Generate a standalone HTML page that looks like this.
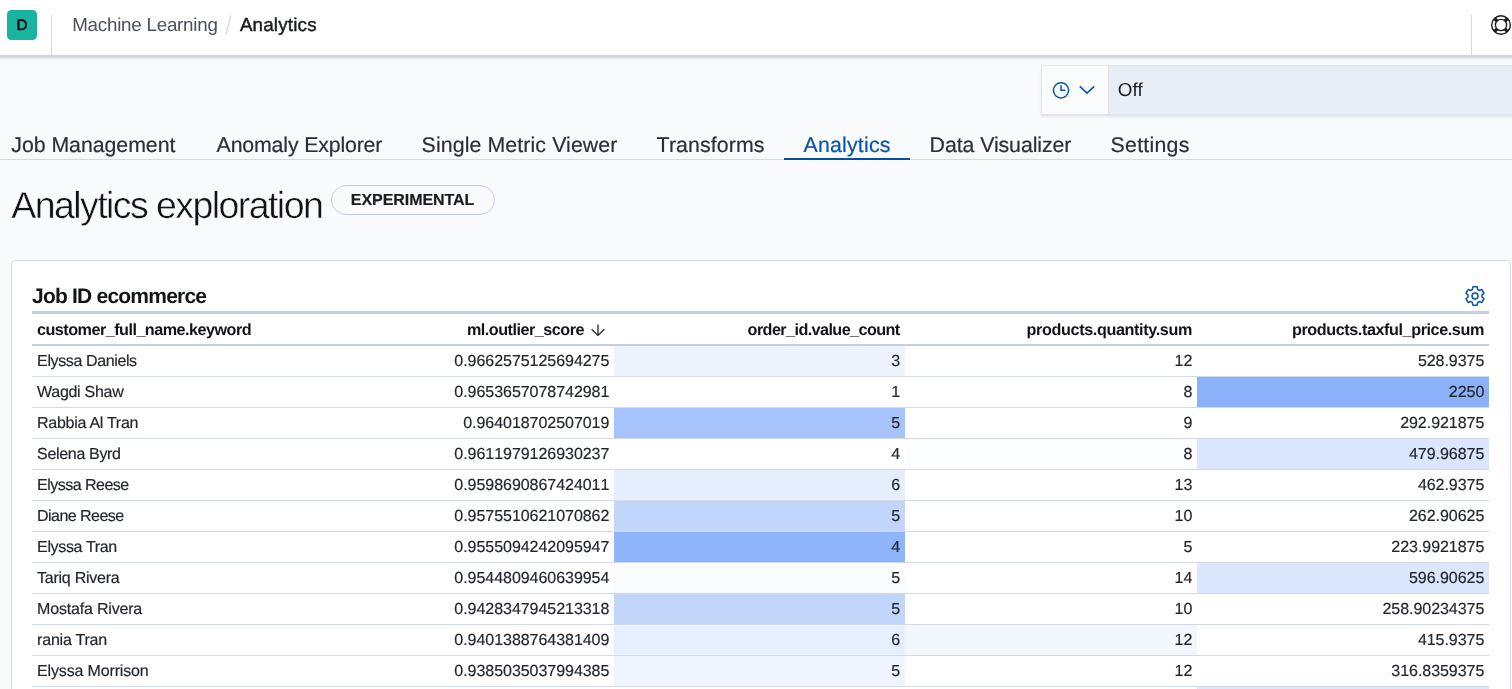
<!DOCTYPE html>
<html lang="en"><head><meta charset="utf-8"><title>Analytics - Machine Learning</title>
<style>
*{box-sizing:border-box}
html,body{margin:0;padding:0}
body{width:1512px;height:689px;overflow:hidden;will-change:transform;text-rendering:geometricPrecision;background:#F9FAFC;font-family:'Liberation Sans', sans-serif;color:#1a1c21;position:relative}
span{white-space:nowrap}
.hdr{position:absolute;left:0;top:0;width:1512px;height:55px;background:#fff;}
.hdr::after{content:'';position:absolute;left:0;top:55px;width:100%;height:6px;background:linear-gradient(#CFD4E1 0,#CFD4E1 1.5px,#DCDFE8 2.5px,#E9ECF1 3.5px,#F3F5F8 4.5px,#F9FAFC 6px)}
.avatar{position:absolute;left:7px;top:10px;width:30px;height:30px;border-radius:4.5px;background:#1AB3A0;color:#000;font-size:15.2px;font-weight:400;-webkit-text-stroke:.45px #000;text-align:center;line-height:31.5px}
.vsep{position:absolute;top:15px;width:1px;height:40px;background:#D3DAE6}
.crumbs{position:absolute;left:72.2px;top:0;height:50px;line-height:50px;font-size:18.8px;color:#4A5061}
.crumbs .cur{color:#1a1c21;-webkit-text-stroke:.45px #1a1c21}
.slash{position:absolute;left:155.6px;top:15px;width:1.3px;height:19.5px;background:#C9D0E0;transform:rotate(15deg)}
.help{position:absolute;left:1489.8px;top:14.2px}
.refresh{position:absolute;left:1041px;top:65px;width:480px;height:50px;background:#E9EDF5;border:1px solid #E0E3EA;box-shadow:0 1.5px 2px rgba(152,162,179,.22)}
.refresh .pre{position:absolute;left:0;top:0;width:67px;height:48px;background:#FBFCFD;border-right:1px solid #E0E3EA}
.refresh .off{position:absolute;left:75.7px;top:-.1px;line-height:47px;font-size:18.8px;color:#1a1c21}
.tabs{position:absolute;left:0;top:129px;width:1512px;height:31px;border-bottom:1px solid #D3DAE6}
.tab{position:absolute;top:0;height:31px;text-align:center;font-size:21.3px;line-height:31px;padding-top:.9px;color:#2B2F38;-webkit-text-stroke:.2px #2B2F38}
.tab.sel{color:#0A55A8;-webkit-text-stroke-color:#0A55A8;border-bottom:2px solid #044FA3}
h1{position:absolute;left:11.2px;top:182.6px;margin:0;font-size:37.5px;font-weight:400;line-height:44px;color:#111318;-webkit-text-stroke:.45px #F9FAFC}
.badge{position:absolute;left:330.6px;top:185px;width:164px;height:30.3px;border:1.5px solid #C4CCDF;border-radius:15px;font-size:16px;font-weight:700;-webkit-text-stroke:.2px #1a1c21;line-height:30.4px;text-align:center;color:#1a1c21;background:#F9FAFC}
.panel{position:absolute;left:11px;top:260px;width:1500px;height:460px;background:#fff;border:1px solid #D3DAE6;border-radius:5px}
h2{position:absolute;left:20px;top:23.5px;margin:0;font-size:21px;font-weight:700;line-height:24px;color:#111318}
.gear{position:absolute;left:1450.8px;top:22.9px}
table{position:absolute;left:20px;top:50px;width:1457px;border-collapse:separate;border-spacing:0;table-layout:fixed;border-top:3px solid #C6CEE0}
th,td{padding:0 5px;height:31px;overflow:hidden;white-space:nowrap}
th{font-size:16.2px;font-weight:700;height:32px;border-bottom:2px solid #C6CEE0;color:#111318;line-height:28px;padding-top:2px}
td{font-size:16px;border-bottom:1px solid #D3DAE6;line-height:28px;padding-top:1.8px;vertical-align:top;color:#23262D;-webkit-text-stroke:.18px #23262D}
td.l{padding-left:5.1px}
.l{text-align:left}
.r{text-align:right;padding-right:4.7px}
.num{font-kerning:none;letter-spacing:-0.042px;margin-right:0.042px}
.sort{vertical-align:-2.1px;margin-left:5.6px;margin-right:3.2px}
</style></head>
<body>
<header class="hdr">
  <div class="avatar">D</div>
  <div class="vsep" style="left:51px"></div>
  <nav class="crumbs"><span style="letter-spacing:-0.241px;margin-right:0.241px">Machine Learning</span><i class="slash"></i><span style="display:inline-block;width:22px"></span><span class="cur" style="letter-spacing:0.193px;margin-right:-0.193px">Analytics</span></nav>
  <div class="vsep" style="left:1471px"></div>
  <svg class="help" width="22" height="22" viewBox="0 0 22 22" fill="none" stroke="#1a1c21" stroke-width="1.4"><circle cx="11" cy="11" r="9.3"/><circle cx="11" cy="11" r="5.6"/><path d="M4.4 4.4l2.6 2.6M17.6 4.4 15 7M4.4 17.6 7 15M17.6 17.6 15 15" stroke-width="3.2"/></svg>
</header>
<div class="refresh">
  <div class="pre">
    <svg style="position:absolute;left:9.1px;top:14.2px" width="20" height="20" viewBox="0 0 20 20" fill="none" stroke="#0A55A8" stroke-width="1.5"><circle cx="10" cy="10.3" r="7.6"/><path d="M10 5.2v5.1h4.2"/></svg>
    <svg style="position:absolute;left:36px;top:17px" width="18" height="12" viewBox="0 0 18 12" fill="none" stroke="#0A55A8" stroke-width="1.6"><path d="M1.8 3.4 9 10.2l7.2-6.8"/></svg>
  </div>
  <div class="off"><span style="letter-spacing:0.141px;margin-right:-0.141px">Off</span></div>
</div>
<nav class="tabs">
<a class="tab" style="left:-8.3px;width:203.3px"><span style="letter-spacing:-0.036px;margin-right:0.036px">Job Management</span></a>
<a class="tab" style="left:197px;width:205px"><span style="letter-spacing:-0.152px;margin-right:0.152px">Anomaly Explorer</span></a>
<a class="tab" style="left:402px;width:235px"><span style="letter-spacing:0.109px;margin-right:-0.109px">Single Metric Viewer</span></a>
<a class="tab" style="left:637px;width:147px"><span style="letter-spacing:0.101px;margin-right:-0.101px">Transforms</span></a>
<a class="tab sel" style="left:784px;width:126px"><span style="letter-spacing:0.198px;margin-right:-0.198px">Analytics</span></a>
<a class="tab" style="left:910px;width:181px"><span style="letter-spacing:-0.075px;margin-right:0.075px">Data Visualizer</span></a>
<a class="tab" style="left:1091px;width:118px"><span style="letter-spacing:0.264px;margin-right:-0.264px">Settings</span></a>
</nav>
<h1><span style="letter-spacing:-1.567px;margin-right:1.567px">Analytics exploration</span></h1>
<div class="badge"><span style="letter-spacing:-0.051px;margin-right:0.051px">EXPERIMENTAL</span></div>
<section class="panel">
  <h2><span style="letter-spacing:-0.783px;margin-right:0.783px">Job ID ecommerce</span></h2>
  <svg class="gear" width="24" height="24" viewBox="0 0 24 24" fill="none" stroke="#0A55A8" stroke-width="1.5" stroke-linejoin="round"><circle cx="12" cy="12" r="3"/><path d="M14.74 5.56 L14.11 2.84 L9.89 2.84 L9.26 5.56 L7.79 6.41 L5.13 5.59 L3.01 9.25 L5.05 11.15 L5.05 12.85 L3.01 14.75 L5.13 18.41 L7.79 17.59 L9.26 18.44 L9.89 21.16 L14.11 21.16 L14.74 18.44 L16.21 17.59 L18.87 18.41 L20.99 14.75 L18.95 12.85 L18.95 11.15 L20.99 9.25 L18.87 5.59 L16.21 6.41Z"/></svg>
  <table>
  <colgroup><col style="width:291px"><col style="width:291.05px"><col style="width:290.85px"><col style="width:292.1px"><col style="width:292px"></colgroup>
  <thead><tr><th class="l"><span style="letter-spacing:-0.52px;margin-right:0.52px">customer_full_name.keyword</span></th><th class="r"><span style="letter-spacing:-0.491px;margin-right:0.491px">ml.outlier_score</span><svg class="sort" width="16" height="14" viewBox="0 0 16 14"><path d="M8 1.5v11M1.6 6.2 8 12.4l6.4-6.2" fill="none" stroke="#23262D" stroke-width="1.3"/></svg></th><th class="r"><span style="letter-spacing:-0.585px;margin-right:0.585px">order_id.value_count</span></th><th class="r"><span style="letter-spacing:-0.379px;margin-right:0.379px">products.quantity.sum</span></th><th class="r"><span style="letter-spacing:-0.417px;margin-right:0.417px">products.taxful_price.sum</span></th></tr></thead>
  <tbody>
<tr><td class="l"><span style="letter-spacing:-0.38px;margin-right:0.38px">Elyssa Daniels</span></td><td class="r"><span class="num">0.9662575125694275</span></td><td class="r" style="background:#EEF4FE"><span class="num">3</span></td><td class="r"><span class="num">12</span></td><td class="r"><span class="num">528.9375</span></td></tr>
<tr><td class="l"><span style="letter-spacing:-0.293px;margin-right:0.293px">Wagdi Shaw</span></td><td class="r"><span class="num">0.9653657078742981</span></td><td class="r"><span class="num">1</span></td><td class="r"><span class="num">8</span></td><td class="r" style="background:#8AB1FA"><span class="num">2250</span></td></tr>
<tr><td class="l"><span style="letter-spacing:-0.281px;margin-right:0.281px">Rabbia Al Tran</span></td><td class="r"><span class="num">0.964018702507019</span></td><td class="r" style="background:#A6C4FB"><span class="num">5</span></td><td class="r"><span class="num">9</span></td><td class="r"><span class="num">292.921875</span></td></tr>
<tr><td class="l"><span style="letter-spacing:-0.327px;margin-right:0.327px">Selena Byrd</span></td><td class="r"><span class="num">0.9611979126930237</span></td><td class="r"><span class="num">4</span></td><td class="r" style="background:#FCFDFF"><span class="num">8</span></td><td class="r" style="background:#D9E6FD"><span class="num">479.96875</span></td></tr>
<tr><td class="l"><span style="letter-spacing:-0.521px;margin-right:0.521px">Elyssa Reese</span></td><td class="r"><span class="num">0.9598690867424011</span></td><td class="r" style="background:#E4EEFD"><span class="num">6</span></td><td class="r"><span class="num">13</span></td><td class="r"><span class="num">462.9375</span></td></tr>
<tr><td class="l"><span style="letter-spacing:-0.54px;margin-right:0.54px">Diane Reese</span></td><td class="r"><span class="num">0.9575510621070862</span></td><td class="r" style="background:#C2D6FB"><span class="num">5</span></td><td class="r"><span class="num">10</span></td><td class="r"><span class="num">262.90625</span></td></tr>
<tr><td class="l"><span style="letter-spacing:-0.349px;margin-right:0.349px">Elyssa Tran</span></td><td class="r"><span class="num">0.9555094242095947</span></td><td class="r" style="background:#8FB4FA"><span class="num">4</span></td><td class="r"><span class="num">5</span></td><td class="r"><span class="num">223.9921875</span></td></tr>
<tr><td class="l"><span style="letter-spacing:-0.251px;margin-right:0.251px">Tariq Rivera</span></td><td class="r"><span class="num">0.9544809460639954</span></td><td class="r" style="background:#FBFCFF"><span class="num">5</span></td><td class="r"><span class="num">14</span></td><td class="r" style="background:#DAE7FD"><span class="num">596.90625</span></td></tr>
<tr><td class="l"><span style="letter-spacing:-0.192px;margin-right:0.192px">Mostafa Rivera</span></td><td class="r"><span class="num">0.9428347945213318</span></td><td class="r" style="background:#C2D6FB"><span class="num">5</span></td><td class="r"><span class="num">10</span></td><td class="r"><span class="num">258.90234375</span></td></tr>
<tr><td class="l"><span style="letter-spacing:-0.216px;margin-right:0.216px">rania Tran</span></td><td class="r"><span class="num">0.9401388764381409</span></td><td class="r" style="background:#E6EFFD"><span class="num">6</span></td><td class="r" style="background:#F2F7FE"><span class="num">12</span></td><td class="r"><span class="num">415.9375</span></td></tr>
<tr><td class="l"><span style="letter-spacing:-0.158px;margin-right:0.158px">Elyssa Morrison</span></td><td class="r"><span class="num">0.9385035037994385</span></td><td class="r" style="background:#EFF5FE"><span class="num">5</span></td><td class="r"><span class="num">12</span></td><td class="r"><span class="num">316.8359375</span></td></tr>
<tr><td class="l"></td><td class="r"></td><td class="r"></td><td class="r"></td><td class="r" style="background:#DCE8FD"></td></tr>
  </tbody>
  </table>
</section>
</body></html>
